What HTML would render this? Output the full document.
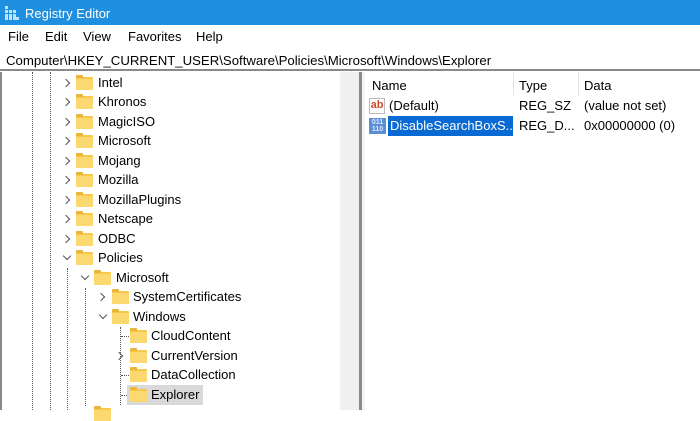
<!DOCTYPE html>
<html><head><style>
*{margin:0;padding:0;box-sizing:border-box}
body{width:700px;height:410px;overflow:hidden;background:#fff;font-family:"Liberation Sans",sans-serif;font-size:13px;color:#000;position:relative}
.abs{position:absolute}
.title{left:0;top:0;width:700px;height:25px;background:#1f8fe0;color:#fff;font-size:13px}
.menu span{position:absolute;top:29px;font-size:13px}
.addr{left:0;top:47px;width:700px;height:24px;border-bottom:2px solid #8a8a8a;font-size:13.2px;padding:6px 0 0 6px}
.dot{position:absolute;width:0;border-left:1px dotted #555}
.hdot{position:absolute;height:0;border-top:1px dotted #555;width:8px}
.row{position:absolute;height:19px;font-size:13px;white-space:nowrap}
.f{position:absolute;width:17px;height:13px;background:#f6c94c;border-radius:1px}
.f:before{content:"";position:absolute;left:0;top:-2px;width:7px;height:3px;background:#e9b53a;border-radius:1px 1px 0 0}
.f:after{content:"";position:absolute;left:0;top:2px;width:17px;height:11px;background:#fcd870;border-radius:1px}
.chev{position:absolute;width:6px;height:6px;border-right:1.3px solid #555;border-bottom:1.3px solid #555}
.r{transform:rotate(-45deg)}
.d{transform:rotate(45deg)}
</style></head><body>
<div class="abs title">
<div class="abs" style="left:5px;top:6px;width:14px;height:14px">
<svg width="14" height="14"><g fill="#bfe3ff"><rect x="0" y="0" width="3" height="3"/><rect x="4" y="4" width="3" height="3"/><rect x="8" y="4" width="3" height="3"/><rect x="0" y="8" width="3" height="3"/><rect x="4" y="8" width="3" height="3"/><rect x="8" y="8" width="3" height="3"/><rect x="0" y="4" width="3" height="3"/><rect x="0" y="11" width="3" height="3"/><rect x="4" y="11" width="3" height="3"/><rect x="8" y="11" width="3" height="3"/><rect x="11" y="11" width="3" height="3"/></g></svg></div>
<div class="abs" style="left:25px;top:6px">Registry Editor</div>
</div>
<div class="menu"><span style="left:8px">File</span><span style="left:45px">Edit</span><span style="left:83px">View</span><span style="left:128px">Favorites</span><span style="left:196px">Help</span></div>
<div class="abs addr">Computer\HKEY_CURRENT_USER\Software\Policies\Microsoft\Windows\Explorer</div>

<div class="abs" style="left:0;top:72px;width:2px;height:338px;background:#888"></div>
<div class="abs" style="left:340px;top:72px;width:19px;height:338px;background:#f0f0f0"></div>
<div class="abs" style="left:359px;top:72px;width:3px;height:338px;background:#8a8a8a"></div>
<div class="abs" style="left:362px;top:72px;width:3px;height:338px;background:#f4f4f4"></div>

<div class="dot" style="left:32px;top:72px;height:338px"></div>
<div class="dot" style="left:50px;top:72px;height:338px"></div>
<div class="dot" style="left:67px;top:268px;height:142px"></div>
<div class="dot" style="left:85px;top:288px;height:118px"></div>
<div class="dot" style="left:120px;top:327px;height:78px"></div>
<div class="hdot" style="left:121px;top:336px"></div>
<div class="hdot" style="left:121px;top:375px"></div>
<div class="hdot" style="left:121px;top:395px"></div>

<div class="chev r" style="left:63px;top:80px"></div><div class="f" style="left:76px;top:77px"></div><div class="row" style="left:98px;top:75px">Intel</div>
<div class="chev r" style="left:63px;top:99px"></div><div class="f" style="left:76px;top:96px"></div><div class="row" style="left:98px;top:94px">Khronos</div>
<div class="chev r" style="left:63px;top:119px"></div><div class="f" style="left:76px;top:116px"></div><div class="row" style="left:98px;top:114px">MagicISO</div>
<div class="chev r" style="left:63px;top:138px"></div><div class="f" style="left:76px;top:135px"></div><div class="row" style="left:98px;top:133px">Microsoft</div>
<div class="chev r" style="left:63px;top:158px"></div><div class="f" style="left:76px;top:155px"></div><div class="row" style="left:98px;top:153px">Mojang</div>
<div class="chev r" style="left:63px;top:177px"></div><div class="f" style="left:76px;top:174px"></div><div class="row" style="left:98px;top:172px">Mozilla</div>
<div class="chev r" style="left:63px;top:197px"></div><div class="f" style="left:76px;top:194px"></div><div class="row" style="left:98px;top:192px">MozillaPlugins</div>
<div class="chev r" style="left:63px;top:216px"></div><div class="f" style="left:76px;top:213px"></div><div class="row" style="left:98px;top:211px">Netscape</div>
<div class="chev r" style="left:63px;top:236px"></div><div class="f" style="left:76px;top:233px"></div><div class="row" style="left:98px;top:231px">ODBC</div>
<div class="chev d" style="left:64px;top:253px"></div><div class="f" style="left:76px;top:252px"></div><div class="row" style="left:98px;top:250px">Policies</div>
<div class="chev d" style="left:82px;top:273px"></div><div class="f" style="left:94px;top:272px"></div><div class="row" style="left:116px;top:270px">Microsoft</div>
<div class="chev r" style="left:98px;top:294px"></div><div class="f" style="left:112px;top:291px"></div><div class="row" style="left:133px;top:289px">SystemCertificates</div>
<div class="chev d" style="left:100px;top:312px"></div><div class="f" style="left:112px;top:311px"></div><div class="row" style="left:133px;top:309px">Windows</div>
<div class="f" style="left:130px;top:330px"></div><div class="row" style="left:151px;top:328px">CloudContent</div>
<div class="chev r" style="left:116px;top:353px"></div><div class="f" style="left:130px;top:350px"></div><div class="row" style="left:151px;top:348px">CurrentVersion</div>
<div class="f" style="left:130px;top:369px"></div><div class="row" style="left:151px;top:367px">DataCollection</div>
<div class="abs" style="left:127px;top:385px;width:76px;height:20px;background:#d9d9d9"></div>
<div class="f" style="left:130px;top:389px"></div><div class="row" style="left:151px;top:387px">Explorer</div>
<div class="f" style="left:94px;top:408px"></div>

<div class="abs" style="left:372px;top:78px">Name</div>
<div class="abs" style="left:513px;top:72px;width:1px;height:24px;background:#e5e5e5"></div>
<div class="abs" style="left:519px;top:78px">Type</div>
<div class="abs" style="left:578px;top:72px;width:1px;height:24px;background:#e5e5e5"></div>
<div class="abs" style="left:584px;top:78px">Data</div>

<div class="abs" style="left:369px;top:98px;width:16px;height:16px;border:1px solid #bbb;background:#fff;color:#d14a2a;font-weight:bold;font-size:11px;line-height:12px;text-align:center">ab</div>
<div class="abs" style="left:389px;top:98px">(Default)</div>
<div class="abs" style="left:519px;top:98px">REG_SZ</div>
<div class="abs" style="left:584px;top:98px">(value not set)</div>

<div class="abs" style="left:369px;top:118px;width:17px;height:16px;background:#5a8fd6;color:#dbe9ff;font-size:7px;line-height:7px;text-align:center;font-weight:bold;padding-top:1px">011<br>110</div>
<div class="abs" style="left:388px;top:116px;width:125px;height:20px;background:#0a6ad4"></div>
<div class="abs" style="left:390px;top:118px;color:#fff">DisableSearchBoxS...</div>
<div class="abs" style="left:519px;top:118px">REG_D...</div>
<div class="abs" style="left:584px;top:118px">0x00000000 (0)</div>
</body></html>
